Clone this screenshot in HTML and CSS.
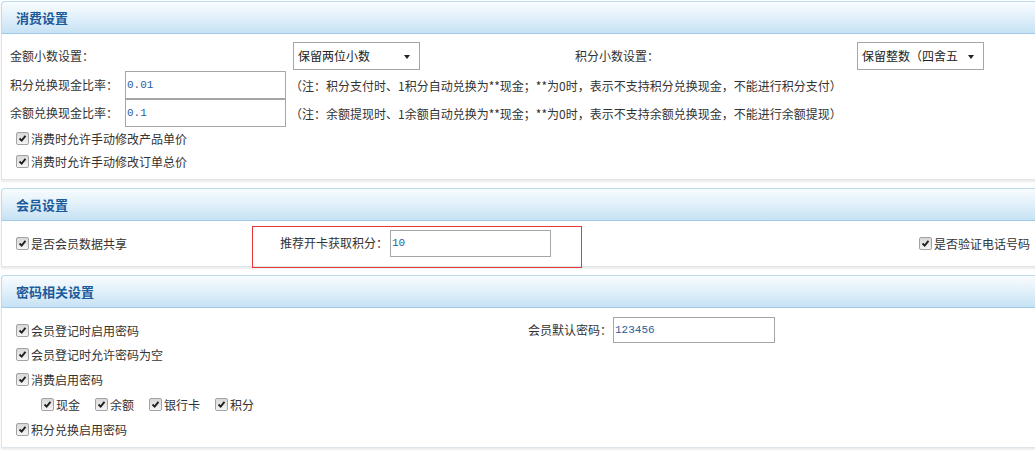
FILE: index.html
```html
<!DOCTYPE html>
<html lang="zh-CN">
<head>
  <meta charset="UTF-8">
  <title>系统设置</title>
  <link rel="stylesheet" href="styles.css">
</head>
<body>
  <div class="page">

    <div class="panel">
      <div class="panel-head">消费设置</div>
      <div class="panel-body">
        <div class="row-decimal">
          <span class="label">金额小数设置：</span>
          <div class="select"><span class="select-text">保留两位小数</span><i class="caret"></i></div>
          <span class="label">积分小数设置：</span>
          <div class="select"><span class="select-text">保留整数（四舍五入）</span><i class="caret"></i></div>
        </div>

        <div class="row-rate">
          <span class="label rate-label">积分兑换现金比率：</span>
          <input class="text-input" type="text" value="0.01">
          <span class="note">（注：积分支付时、1积分自动兑换为**现金；**为0时，表示不支持积分兑换现金，不能进行积分支付）</span>
        </div>
        <div class="row-rate">
          <span class="label rate-label">余额兑换现金比率：</span>
          <input class="text-input" type="text" value="0.1">
          <span class="note">（注：余额提现时、1余额自动兑换为**现金；**为0时，表示不支持余额兑换现金，不能进行余额提现）</span>
        </div>

        <label class="chk row-check"><span class="box"><svg viewBox="0 0 13 13"><path d="M3 6.5 L5.5 9 L10 3.5" /></svg></span>消费时允许手动修改产品单价</label>
        <label class="chk row-check"><span class="box"><svg viewBox="0 0 13 13"><path d="M3 6.5 L5.5 9 L10 3.5" /></svg></span>消费时允许手动修改订单总价</label>
      </div>
    </div>

    <div class="panel">
      <div class="panel-head">会员设置</div>
      <div class="panel-body">
        <div class="row-member">
          <label class="chk"><span class="box"><svg viewBox="0 0 13 13"><path d="M3 6.5 L5.5 9 L10 3.5" /></svg></span>是否会员数据共享</label>
          <div class="highlight">
            <span class="label hl-label">推荐开卡获取积分：</span>
            <input class="text-input" type="text" value="10">
          </div>
          <label class="chk chk-right"><span class="box"><svg viewBox="0 0 13 13"><path d="M3 6.5 L5.5 9 L10 3.5" /></svg></span>是否验证电话号码</label>
        </div>
      </div>
    </div>

    <div class="panel">
      <div class="panel-head">密码相关设置</div>
      <div class="panel-body pwd-body">
        <div class="pwd-grid">
          <label class="chk pwd-first"><span class="box"><svg viewBox="0 0 13 13"><path d="M3 6.5 L5.5 9 L10 3.5" /></svg></span>会员登记时启用密码</label>
          <div class="pwd-default">
            <span class="label">会员默认密码：</span>
            <input class="text-input pwd-input" type="text" value="123456">
          </div>
        </div>
        <label class="chk pwd-row"><span class="box"><svg viewBox="0 0 13 13"><path d="M3 6.5 L5.5 9 L10 3.5" /></svg></span>会员登记时允许密码为空</label>
        <label class="chk pwd-row"><span class="box"><svg viewBox="0 0 13 13"><path d="M3 6.5 L5.5 9 L10 3.5" /></svg></span>消费启用密码</label>
        <div class="pwd-row pay-types">
          <label class="chk"><span class="box"><svg viewBox="0 0 13 13"><path d="M3 6.5 L5.5 9 L10 3.5" /></svg></span>现金</label>
          <label class="chk"><span class="box"><svg viewBox="0 0 13 13"><path d="M3 6.5 L5.5 9 L10 3.5" /></svg></span>余额</label>
          <label class="chk"><span class="box"><svg viewBox="0 0 13 13"><path d="M3 6.5 L5.5 9 L10 3.5" /></svg></span>银行卡</label>
          <label class="chk"><span class="box"><svg viewBox="0 0 13 13"><path d="M3 6.5 L5.5 9 L10 3.5" /></svg></span>积分</label>
        </div>
        <label class="chk pwd-row"><span class="box"><svg viewBox="0 0 13 13"><path d="M3 6.5 L5.5 9 L10 3.5" /></svg></span>积分兑换启用密码</label>
      </div>
    </div>

  </div>
</body>
</html>
```

FILE: styles.css
```css
body {
  margin: 0;
  overflow: hidden;
  background: #fff;
  font-family: "Noto Sans CJK SC", "Liberation Sans", sans-serif;
  font-size: 12px;
  color: #333;
}

.page {
  padding-top: 1px;
}

.panel {
  margin: 0 -6px 8px 1px;
  border: 1px solid #dde4ea;
  border-radius: 4px 0 0 0;
  box-shadow: 0 2px 2px rgba(0, 0, 0, 0.08);
  background: #fff;
}

.panel-head {
  height: 31px;
  line-height: 31px;
  padding-left: 14px;
  border-top: 1px solid #bcdcf0;
  border-bottom: 1px solid #9fcbe8;
  margin: -1px -1px 0 -1px;
  border-left: 1px solid #bcdcf0;
  border-radius: 4px 0 0 0;
  background: linear-gradient(to bottom, #f8fcfe 0%, #e3f1fa 45%, #c6e2f4 100%);
  color: #1b5a9b;
  font-size: 13px;
  font-weight: bold;
}

.panel-body {
  padding: 8px 10px 6px 8px;
}

.label {
  line-height: 28px;
  white-space: nowrap;
}

/* row 1 */
.row-decimal {
  display: grid;
  grid-template-columns: 283px 282px 282px 1fr;
  align-items: center;
  height: 28px;
  margin-bottom: 1px;
}

.select {
  width: 125px;
  height: 26px;
  border: 1px solid #a6a6a6;
  display: flex;
  align-items: center;
  background: #fff;
  color: #222;
}

.select-text {
  flex: 1;
  height: 18px;
  line-height: 18px;
  padding-left: 4px;
  overflow: hidden;
  word-break: break-all;
}

.caret {
  width: 0;
  height: 0;
  margin: 1px 9px 0 4px;
  border-left: 3px solid transparent;
  border-right: 3px solid transparent;
  border-top: 4px solid #222;
}

/* rate rows */
.row-rate {
  display: flex;
  align-items: center;
  height: 28px;
}

.rate-label {
  width: 115px;
}

.text-input {
  box-sizing: border-box;
  width: 161px;
  height: 28px;
  margin: 0;
  padding: 0 0 0 1px;
  border: 1px solid #a6a6a6;
  font-family: "Liberation Mono", monospace;
  font-size: 11px;
  color: #2a5d9a;
  outline: none;
}

.note {
  margin-left: 4px;
  white-space: nowrap;
}

/* checkboxes */
.chk {
  display: flex;
  align-items: center;
  white-space: nowrap;
}

.box {
  box-sizing: border-box;
  width: 13px;
  height: 13px;
  margin-right: 2px;
  border: 1px solid #a3a3a3;
  border-radius: 2px;
  background: linear-gradient(to bottom, #d8d8d8, #f5f5f5);
  display: flex;
}

.box svg {
  width: 11px;
  height: 11px;
}

.box path {
  fill: none;
  stroke: #1f1f1f;
  stroke-width: 2.2;
}

.row-check {
  height: 23px;
  padding-left: 6px;
}

/* member row */
.row-member {
  display: grid;
  grid-template-columns: 242px 330px 1fr;
  align-items: center;
  height: 27px;
  padding-bottom: 4px;
}

.row-member > .chk {
  padding-left: 6px;
}

.chk-right {
  justify-self: end;
}

.highlight {
  position: relative;
  display: flex;
  align-items: center;
}

.highlight::after {
  content: "";
  position: absolute;
  left: 0;
  top: -3px;
  width: 330px;
  height: 42px;
  box-sizing: border-box;
  border: 1px solid #e8383a;
  pointer-events: none;
}

.hl-label {
  width: 136px;
  text-align: right;
  padding-right: 2px;
}

.highlight .text-input {
  height: 27px;
}

/* password panel */
.pwd-body {
  padding-bottom: 5px;
}

.pwd-grid {
  display: grid;
  grid-template-columns: 518px 1fr;
  align-items: center;
  height: 26px;
}

.pwd-first {
  padding-left: 6px;
}

.pwd-default {
  display: flex;
  align-items: center;
}

.pwd-input {
  width: 162px;
  height: 26px;
  margin-left: 1px;
}

.pwd-row {
  height: 25px;
  padding-left: 6px;
}

.pay-types {
  display: flex;
  align-items: center;
  padding-left: 31px;
}

.pay-types .chk {
  margin-right: 15px;
}
```
